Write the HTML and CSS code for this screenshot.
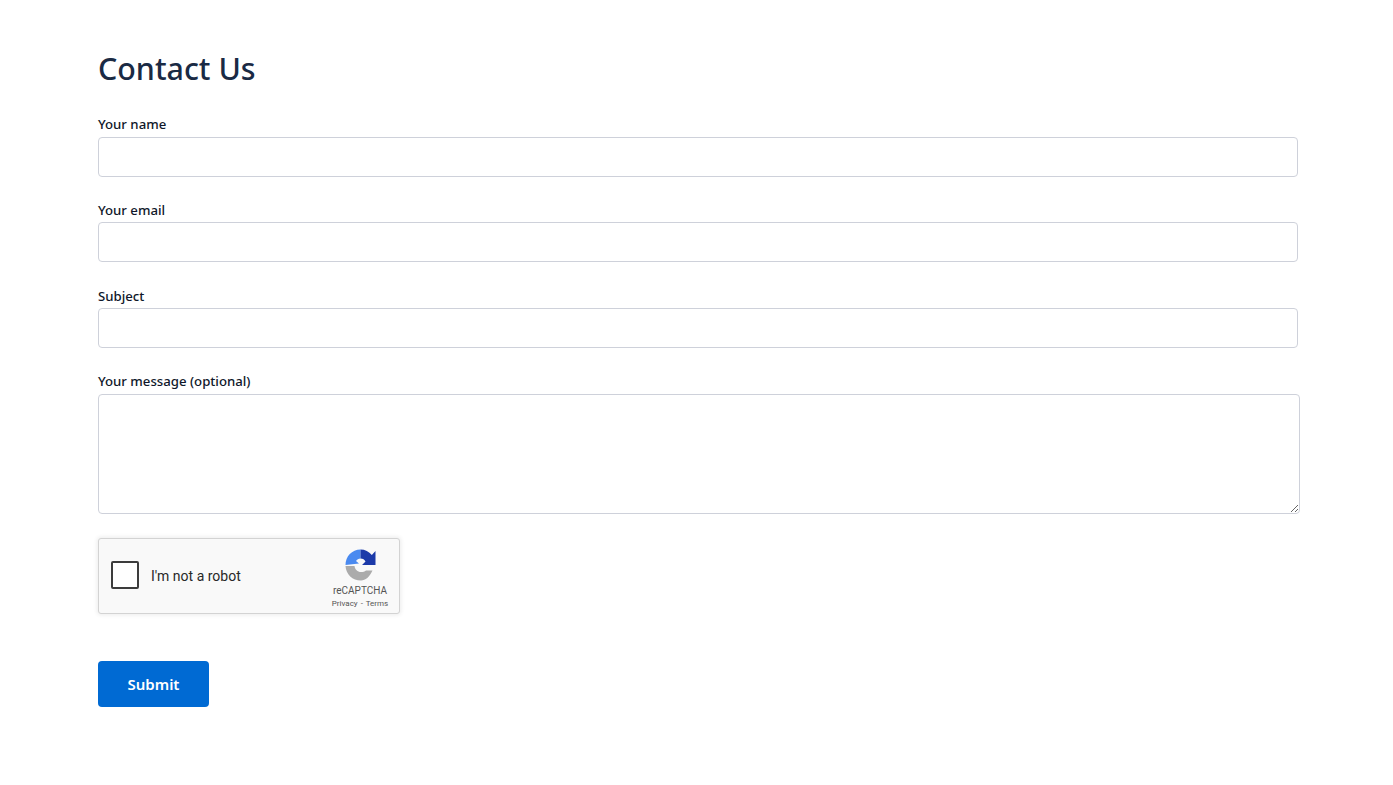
FILE: index.html
```html
<!DOCTYPE html>
<html lang="en">
  <head>
    <meta charset="UTF-8" />
    <meta name="viewport" content="width=device-width, initial-scale=1.0" />
    <title>Contact Us</title>
    <link rel="stylesheet" href="styles.css">
  </head>
  <body>
    <div class="contact-container">
      <h1 class="contact-title">Contact Us</h1>
      <form class="contact-form">
        <div class="field">
          <label for="yourName">Your name</label>
          <input type="text" id="yourName" />
        </div>
        <div class="field">
          <label for="yourEmail">Your email</label>
          <input type="email" id="yourEmail" />
        </div>
        <div class="field">
          <label for="subject">Subject</label>
          <input type="text" id="subject" />
        </div>
        <div class="field">
          <label for="message">Your message (optional)</label>
          <textarea id="message"></textarea>
        </div>
        <div class="recaptcha">
          <div class="recaptcha-check">
            <span class="recaptcha-box"></span>
            <span class="recaptcha-label">I'm not a robot</span>
          </div>
          <div class="recaptcha-brand">
            <svg class="recaptcha-logo" viewBox="0 0 32 32" width="32" height="32">
              <path fill="#4a8af0" d="M15.5 .5V9.500C13.500 9.500 12 10.500 11 12L14 14.500 .5 16C.5 7.500 7 .5 15.5 .5Z" />
              <path fill="#1c3aa9" d="M15.5 .5C20 .5 24 2.500 26.800 6L30.500 2V16H17L20.500 12.500C19.500 10.500 18 9.500 15.500 9.500Z" />
              <path fill="#ababab" d="M.5 17H9.500C10 20.500 12.500 23 16 23 18 23 19.700 22.500 21 21.500H27.500C24.500 28 20.500 31.500 16 31.500 7.500 31.500 1 25.500 .5 17Z" />
            </svg>
            <span class="recaptcha-name">reCAPTCHA</span>
            <span class="recaptcha-links">Privacy - Terms</span>
          </div>
        </div>
        <button type="button" class="submit-button">Submit</button>
      </form>
    </div>
  </body>
</html>
```

FILE: styles.css
```css
body {
  margin: 0;
  background-color: #fff;
  color: #0f172a;
  font-family: "Noto Sans", "Open Sans", Arial, sans-serif;
}

.contact-container {
  padding: 49px 98px 78px;
}

.contact-title {
  margin: 0 0 22.3px;
  color: #1a2a44;
  font-size: 30.4px;
  font-weight: 500;
  line-height: 40px;
}

.field {
  margin-bottom: 20.37px;
}

.field label {
  display: block;
  height: 25.3px;
  font-size: 13.2px;
  font-weight: 500;
  line-height: 26px;
}

input,
textarea {
  display: block;
  box-sizing: border-box;
  width: 1200px;
  height: 40px;
  padding: 8px 12px;
  border: 1px solid #ced1da;
  border-radius: 4px;
  background-color: #fff;
  outline: none;
}

textarea {
  width: 1202px;
  height: 120px;
}

.recaptcha {
  display: flex;
  justify-content: space-between;
  box-sizing: border-box;
  width: 302px;
  height: 76px;
  margin-top: 24px;
  border: 1px solid #d3d3d3;
  border-radius: 3px;
  background-color: #f9f9f9;
  box-shadow: 0 0 4px 1px rgba(0, 0, 0, 0.08);
  font-family: Roboto, Arial, sans-serif;
}

.recaptcha-check {
  display: flex;
  align-items: center;
  gap: 12px;
  padding-left: 12px;
}

.recaptcha-box {
  box-sizing: border-box;
  width: 28px;
  height: 28px;
  margin-bottom: 2px;
  border: 2px solid #3c3c3c;
  border-radius: 2px;
  background-color: #fff;
}

.recaptcha-label {
  color: #282828;
  font-size: 14px;
}

.recaptcha-brand {
  display: flex;
  flex-direction: column;
  align-items: center;
  width: 62px;
  padding: 10px 8px 0 0;
  color: #555;
}

.recaptcha-logo {
  display: block;
  margin-left: 1px;
}

.recaptcha-name {
  margin-top: 2px;
  font-size: 10px;
  line-height: 15px;
}

.recaptcha-links {
  margin-top: 1px;
  font-size: 8px;
  line-height: 10px;
  word-spacing: 1px;
  white-space: nowrap;
}

.submit-button {
  display: block;
  width: 111px;
  height: 46px;
  margin-top: 47px;
  padding: 0;
  border: none;
  border-radius: 4px;
  background-color: #006ad3;
  color: #fff;
  font-family: inherit;
  font-size: 15px;
  font-weight: 600;
}
```
